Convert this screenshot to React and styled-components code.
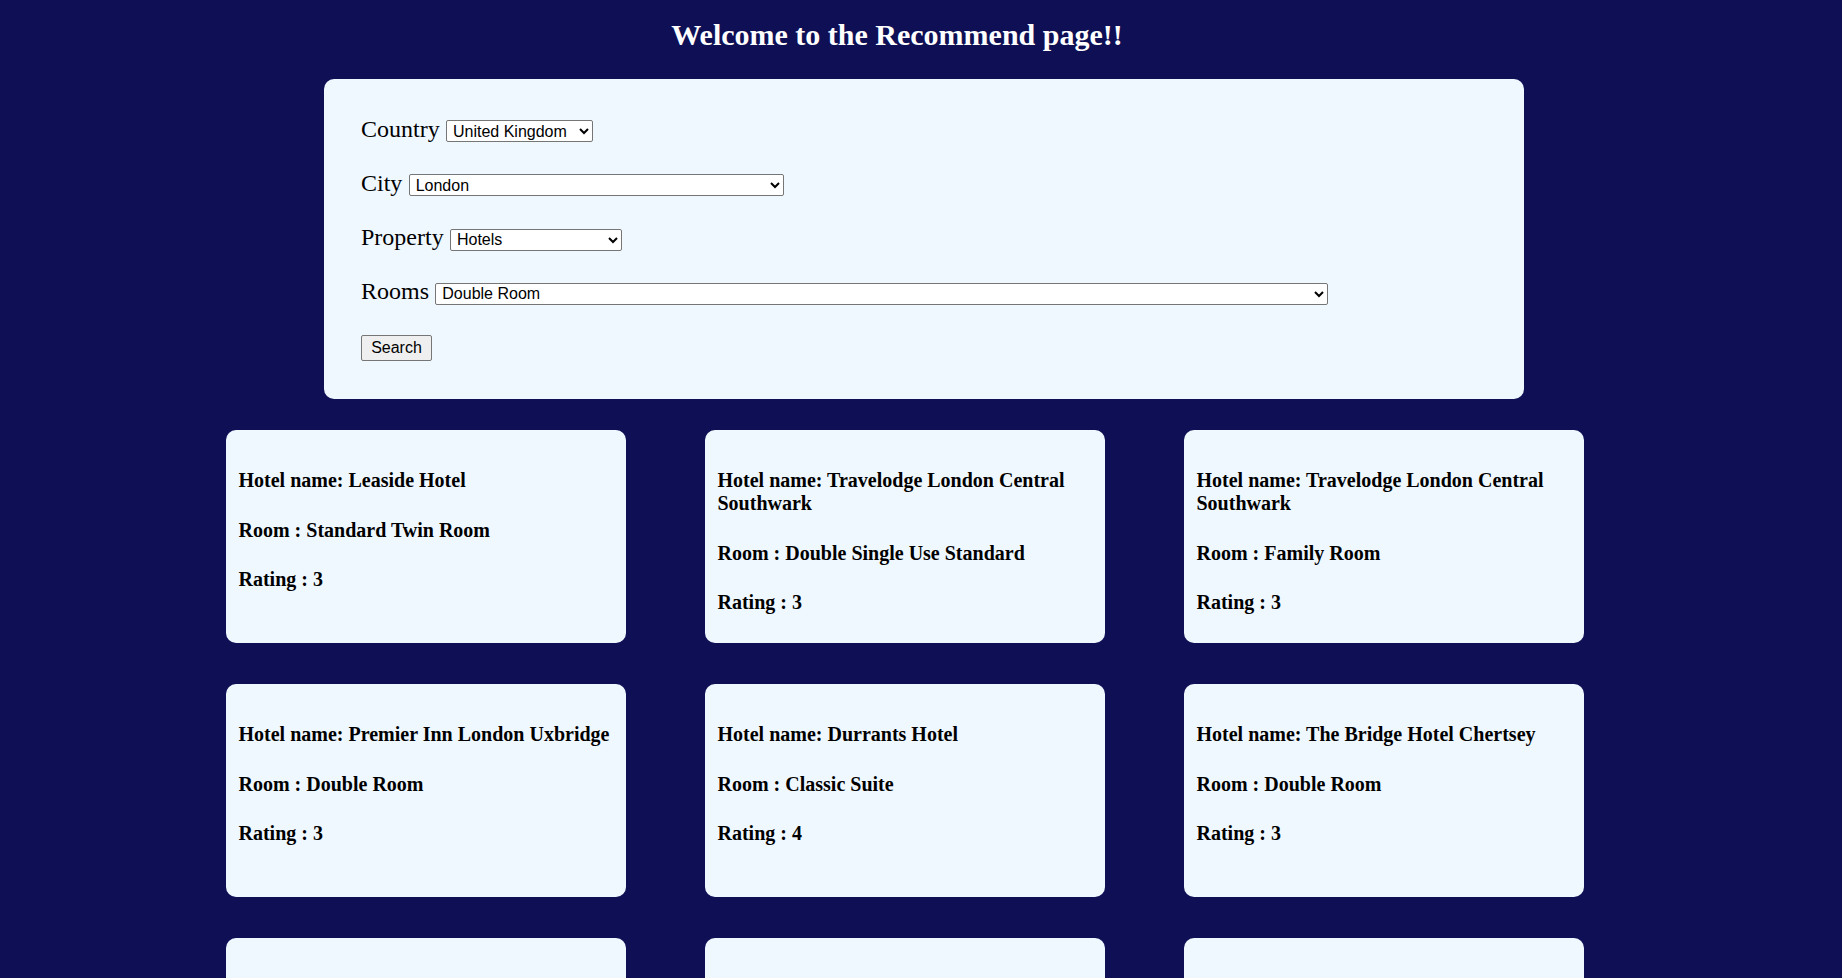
import React from "react";
import styled, { createGlobalStyle } from "styled-components";

const GlobalStyle = createGlobalStyle`
  html {
    scrollbar-width: none;
  }
  html::-webkit-scrollbar { display: none; }
  body {
    margin: 0;
    background: #0e0f55;
    font-family: "Liberation Serif", "Times New Roman", serif;
  }
`;

const Page = styled.div`
  display: flex;
  flex-direction: column;
  padding-bottom: 60px;
`;

const Title = styled.h2`
  margin: 18px 0 26.5px;
  padding-right: 48px;
  text-align: center;
  color: #ffffff;
  font-size: 30px;
  font-weight: bold;
  line-height: normal;
`;

const Panel = styled.form`
  box-sizing: border-box;
  width: 1200px;
  height: 320px;
  margin-left: 324px;
  padding: 37.2px 37px 0;
  background: #f0f8ff;
  border-radius: 10px;
`;

const Row = styled.div`
  display: flex;
  align-items: baseline;
  gap: 6.3px;
  margin-bottom: 27.2px;
`;

const Label = styled.label`
  font-family: "Liberation Serif", "Times New Roman", serif;
  font-size: 24px;
  color: #000;
  line-height: normal;
`;

const Select = styled.select`
  box-sizing: border-box;
  width: ${(p) => p.$w}px;
  height: 22px;
  padding: 0 0 0 2px;
  font-family: "Liberation Sans", Arial, sans-serif;
  font-size: 16px;
  color: #000;
  background-color: #fff;
  border: 1px solid #767676;
  border-radius: 2px;
`;

const Button = styled.button`
  box-sizing: border-box;
  width: 71px;
  height: 26px;
  margin-top: 2.9px;
  padding: 0;
  font-family: "Liberation Sans", Arial, sans-serif;
  font-size: 16px;
  color: #000;
  background: #efefef;
  border: 1px solid #767676;
  border-radius: 2px;
`;

const Grid = styled.div`
  display: grid;
  grid-template-columns: repeat(3, 400px);
  column-gap: 79px;
  row-gap: 41px;
  margin: 31px 0 0 226px;
`;

const Card = styled.div`
  box-sizing: border-box;
  height: 213px;
  padding: 13px 12.5px 0;
  background: #f0f8ff;
  border-radius: 10px;
  overflow: hidden;
`;

const Line = styled.h4`
  margin: 26.6px 0;
  font-size: 20px;
  font-weight: bold;
  line-height: normal;
  color: #000;
`;

const hotels = [
  { name: "Leaside Hotel", room: "Standard Twin Room", rating: 3 },
  { name: "Travelodge London Central Southwark", room: "Double Single Use Standard", rating: 3 },
  { name: "Travelodge London Central Southwark", room: "Family Room", rating: 3 },
  { name: "Premier Inn London Uxbridge", room: "Double Room", rating: 3 },
  { name: "Durrants Hotel", room: "Classic Suite", rating: 4 },
  { name: "The Bridge Hotel Chertsey", room: "Double Room", rating: 3 },
  { name: "Premier Inn London Kensington", room: "Double Room", rating: 3 },
  { name: "The Montcalm London Marble Arch", room: "Superior Double Room", rating: 5 },
  { name: "Hotel Xenia", room: "Deluxe Double Room", rating: 4 },
];

export default function App() {
  return (
    <Page>
      <GlobalStyle />
      <Title>Welcome to the Recommend page!!</Title>
      <Panel onSubmit={(e) => e.preventDefault()}>
        <Row>
          <Label>Country</Label>
          <Select $w={147} defaultValue="United Kingdom">
            <option>United Kingdom</option>
          </Select>
        </Row>
        <Row>
          <Label>City</Label>
          <Select $w={375} defaultValue="London">
            <option>London</option>
          </Select>
        </Row>
        <Row>
          <Label>Property</Label>
          <Select $w={172} defaultValue="Hotels">
            <option>Hotels</option>
          </Select>
        </Row>
        <Row>
          <Label>Rooms</Label>
          <Select $w={893} defaultValue="Double Room">
            <option>Double Room</option>
          </Select>
        </Row>
        <Button type="submit">Search</Button>
      </Panel>
      <Grid>
        {hotels.map((h, i) => (
          <Card key={i}>
            <Line>Hotel name: {h.name}</Line>
            <Line>Room : {h.room}</Line>
            <Line>Rating : {h.rating}</Line>
          </Card>
        ))}
      </Grid>
    </Page>
  );
}
